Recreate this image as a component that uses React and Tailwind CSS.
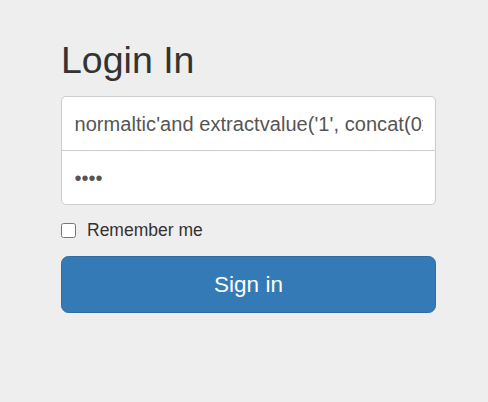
export default function App() {
  return (
    <div
      className="min-h-screen bg-[#eeeeee] pt-[40px] pl-[61px]"
      style={{ fontFamily: '"Liberation Sans", Arial, sans-serif' }}
    >
      <form className="w-[375px] flex flex-col" onSubmit={e => e.preventDefault()}>
        {/* Heading */}
        <h2 className="text-[37.5px] leading-[1.1] font-normal text-[#333333] mb-[15px]">
          Login In
        </h2>

        {/* Credentials – wrapper keeps the text clipped at the content edge */}
        <div
          className="relative h-[55px] -mb-px px-[12.5px] flex bg-white
                     border border-[#cccccc] rounded-t-[5px]"
        >
          <div className="flex-1 min-w-0 overflow-hidden flex">
            <input
              type="text"
              readOnly
              value="normaltic'and extractvalue('1', concat(0x3a, (select database()))) and '1'='1"
              className="w-full min-w-0 p-0 text-[20px] tracking-[0.06px] text-[#555555] bg-transparent outline-none"
            />
          </div>
        </div>
        <div
          className="relative h-[55px] px-[12.5px] flex bg-white
                     border border-[#cccccc] rounded-b-[5px]"
        >
          <input
            type="password"
            readOnly
            value="1234"
            className="w-full min-w-0 p-0 text-[20px] text-[#555555] bg-transparent outline-none"
          />
        </div>

        {/* Remember me */}
        <label className="mt-[12px] h-[26px] flex items-center gap-[11px] text-[17.5px] text-[#333333]">
          <input type="checkbox" className="m-0 w-[15px] h-[15px]" />
          Remember me
        </label>

        {/* Submit */}
        <button
          type="submit"
          className="mt-[13px] h-[57px] w-full bg-[#337ab7] border border-[#2e6da4] rounded-[7.5px]
                     text-white text-[22.5px]"
        >
          Sign in
        </button>
      </form>
    </div>
  )
}
